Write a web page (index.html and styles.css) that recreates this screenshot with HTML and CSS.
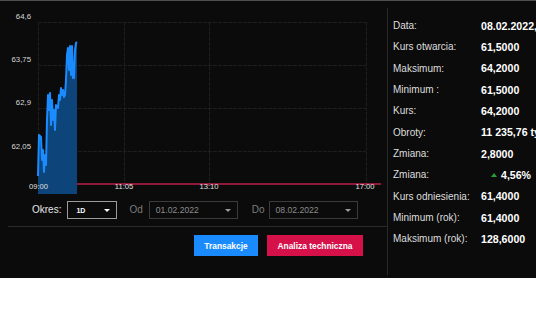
FILE: index.html
```html
<!DOCTYPE html>
<html lang="pl">
<head>
<meta charset="utf-8">
<link rel="stylesheet" href="styles.css">
</head>
<body>
<div class="frame">
  <div class="panel">
    <section class="left">
      <svg class="chart" width="387" height="196" viewBox="0 1 387 196">
        <g class="grid">
          <line x1="38" y1="22" x2="366" y2="22"/>
          <line x1="38" y1="65" x2="366" y2="65"/>
          <line x1="38" y1="108" x2="366" y2="108"/>
          <line x1="38" y1="151" x2="366" y2="151"/>
          <line x1="38" y1="22" x2="38" y2="184"/>
          <line x1="124" y1="22" x2="124" y2="184"/>
          <line x1="209" y1="22" x2="209" y2="184"/>
          <line x1="366" y1="22" x2="366" y2="184"/>
        </g>
        <line class="base" x1="38" y1="184" x2="381" y2="184"/>
        <path class="area" d="M38 176 L39 135 L41 137 L42 160 L43 150 L44 172 L45 155 L46 165 L47 120 L48 95 L49 110 L50 93 L51 125 L52 100 L53 120 L54 110 L55 130 L56 105 L58 108 L59 95 L60 100 L61 88 L62 95 L63 90 L64 97 L65 95 L66 80 L67 55 L68 48 L69 70 L70 46 L71 75 L72 46 L73 78 L74 78 L75 50 L76 43 L77 42 L77 194 L38 194 Z"/>
        <path class="line" d="M38 176 L39 135 L41 137 L42 160 L43 150 L44 172 L45 155 L46 165 L47 120 L48 95 L49 110 L50 93 L51 125 L52 100 L53 120 L54 110 L55 130 L56 105 L58 108 L59 95 L60 100 L61 88 L62 95 L63 90 L64 97 L65 95 L66 80 L67 55 L68 48 L69 70 L70 46 L71 75 L72 46 L73 78 L74 78 L75 50 L76 43 L77 42"/>
        <g class="ylab">
          <text x="31" y="18.5">64,6</text>
          <text x="31" y="62">63,75</text>
          <text x="31" y="105">62,9</text>
          <text x="31" y="148.5">62,05</text>
        </g>
        <g class="xlab">
          <text x="38.5" y="189">09:00</text>
          <text x="124" y="189">11:05</text>
          <text x="209" y="189">13:10</text>
          <text x="365" y="189">17:00</text>
        </g>
      </svg>
      <div class="controls">
        <span class="lbl lbl-main">Okres:</span>
        <div class="select select-period"><span>1D</span><i class="caret"></i></div>
        <span class="lbl lbl-dim">Od</span>
        <div class="select select-date"><span>01.02.2022</span><i class="caret"></i></div>
        <span class="lbl lbl-dim lbl-do">Do</span>
        <div class="select select-date"><span>08.02.2022</span><i class="caret"></i></div>
      </div>
      <div class="sep"></div>
      <div class="actions">
        <button class="btn btn-blue">Transakcje</button>
        <button class="btn btn-red">Analiza techniczna</button>
      </div>
    </section>
    <aside class="right">
      <div class="row"><span class="k">Data:</span><span class="v">08.02.2022, 17:00</span></div>
      <div class="row"><span class="k">Kurs otwarcia:</span><span class="v">61,5000</span></div>
      <div class="row"><span class="k">Maksimum:</span><span class="v">64,2000</span></div>
      <div class="row"><span class="k">Minimum :</span><span class="v">61,5000</span></div>
      <div class="row"><span class="k">Kurs:</span><span class="v">64,2000</span></div>
      <div class="row"><span class="k">Obroty:</span><span class="v">11 235,76 tys. zł</span></div>
      <div class="row"><span class="k">Zmiana:</span><span class="v">2,8000</span></div>
      <div class="row"><span class="k">Zmiana:</span><span class="v up"><i class="tri"></i>4,56%</span></div>
      <div class="row"><span class="k">Kurs odniesienia:</span><span class="v">61,4000</span></div>
      <div class="row"><span class="k">Minimum (rok):</span><span class="v">61,4000</span></div>
      <div class="row"><span class="k">Maksimum (rok):</span><span class="v">128,6000</span></div>
    </aside>
  </div>
</div>
</body>
</html>
```

FILE: styles.css
```css
html, body {
  margin: 0;
  padding: 0;
  background: #ffffff;
}
body {
  font-family: "Liberation Sans", Arial, sans-serif;
  overflow: hidden;
}
.frame {
  width: 536px;
  overflow: hidden;
}
.panel {
  display: flex;
  width: 620px;
  height: 277px;
  background: #0b0b0b;
  border-top: 1px solid #4e4e4e;
}
.left {
  width: 387px;
  flex: none;
  display: flex;
  flex-direction: column;
}
.chart {
  display: block;
}
.grid line {
  stroke: #1e1e1e;
  stroke-width: 1;
  stroke-dasharray: 4 1;
  shape-rendering: crispEdges;
}
.base {
  stroke: #bd1f4b;
  stroke-width: 1.5;
}
.area {
  fill: #0d4479;
}
.line {
  fill: none;
  stroke: #1b8cff;
  stroke-width: 2;
  stroke-linejoin: round;
}
.ylab text {
  fill: #d8d8d8;
  font-size: 7.8px;
  text-anchor: end;
}
.xlab text {
  fill: #e0e0e0;
  font-size: 7.6px;
  text-anchor: middle;
}
.controls {
  display: flex;
  align-items: center;
  height: 18px;
  margin-top: 4px;
  padding-left: 32px;
}
.lbl {
  font-size: 10px;
  line-height: 12px;
}
.lbl-main {
  color: #e6e6e6;
  margin-right: 6px;
}
.lbl-dim {
  color: #7c7c7c;
  margin: 0 6px 0 12px;
}
.lbl-do {
  margin-left: 14px;
  margin-right: 4px;
}
.select {
  box-sizing: border-box;
  height: 18px;
  display: flex;
  align-items: center;
  justify-content: space-between;
  position: relative;
}
.select-period {
  width: 50px;
  border: 1px solid #9c9c9c;
  padding: 0 6px 0 8px;
  color: #ffffff;
  font-size: 7px;
  font-weight: bold;
}
.select-date {
  width: 89px;
  border: 1px solid #3b3b3b;
  padding: 0 6px 0 6px;
  color: #8c8c8c;
  font-size: 8.6px;
}
.caret {
  width: 0;
  height: 0;
  border-left: 3px solid transparent;
  border-right: 3px solid transparent;
  border-top: 3px solid #ffffff;
  margin-top: 1px;
}
.select-date .caret {
  border-top-color: #9a9a9a;
}
.sep {
  height: 1px;
  background: #2a2a2a;
  margin: 7px 0 0 8px;
}
.actions {
  display: flex;
  justify-content: flex-end;
  gap: 9px;
  padding-right: 24px;
  margin-top: 8px;
}
.btn {
  height: 21px;
  border: 0;
  padding: 0;
  color: #ffffff;
  font-family: "Liberation Sans", Arial, sans-serif;
  font-weight: bold;
  font-size: 8.4px;
}
.btn-blue {
  width: 64px;
  background: #1a8bff;
}
.btn-red {
  width: 96px;
  background: #d6114a;
}
.right {
  flex: none;
  width: 232px;
  margin: 7px 0 3px 0;
  border-left: 1px solid #2a2a2a;
  padding: 7px 0 0 5px;
}
.row {
  display: flex;
  align-items: center;
  height: 21.33px;
  white-space: nowrap;
}
.k {
  width: 88px;
  flex: none;
  color: #dedede;
  font-size: 10px;
}
.v {
  color: #ffffff;
  font-size: 10.6px;
  font-weight: bold;
  display: flex;
  align-items: center;
}
.up {
  padding-left: 10px;
}
.tri {
  width: 0;
  height: 0;
  border-left: 3px solid transparent;
  border-right: 3px solid transparent;
  border-bottom: 4px solid #27a03a;
  margin-right: 4px;
}
```
